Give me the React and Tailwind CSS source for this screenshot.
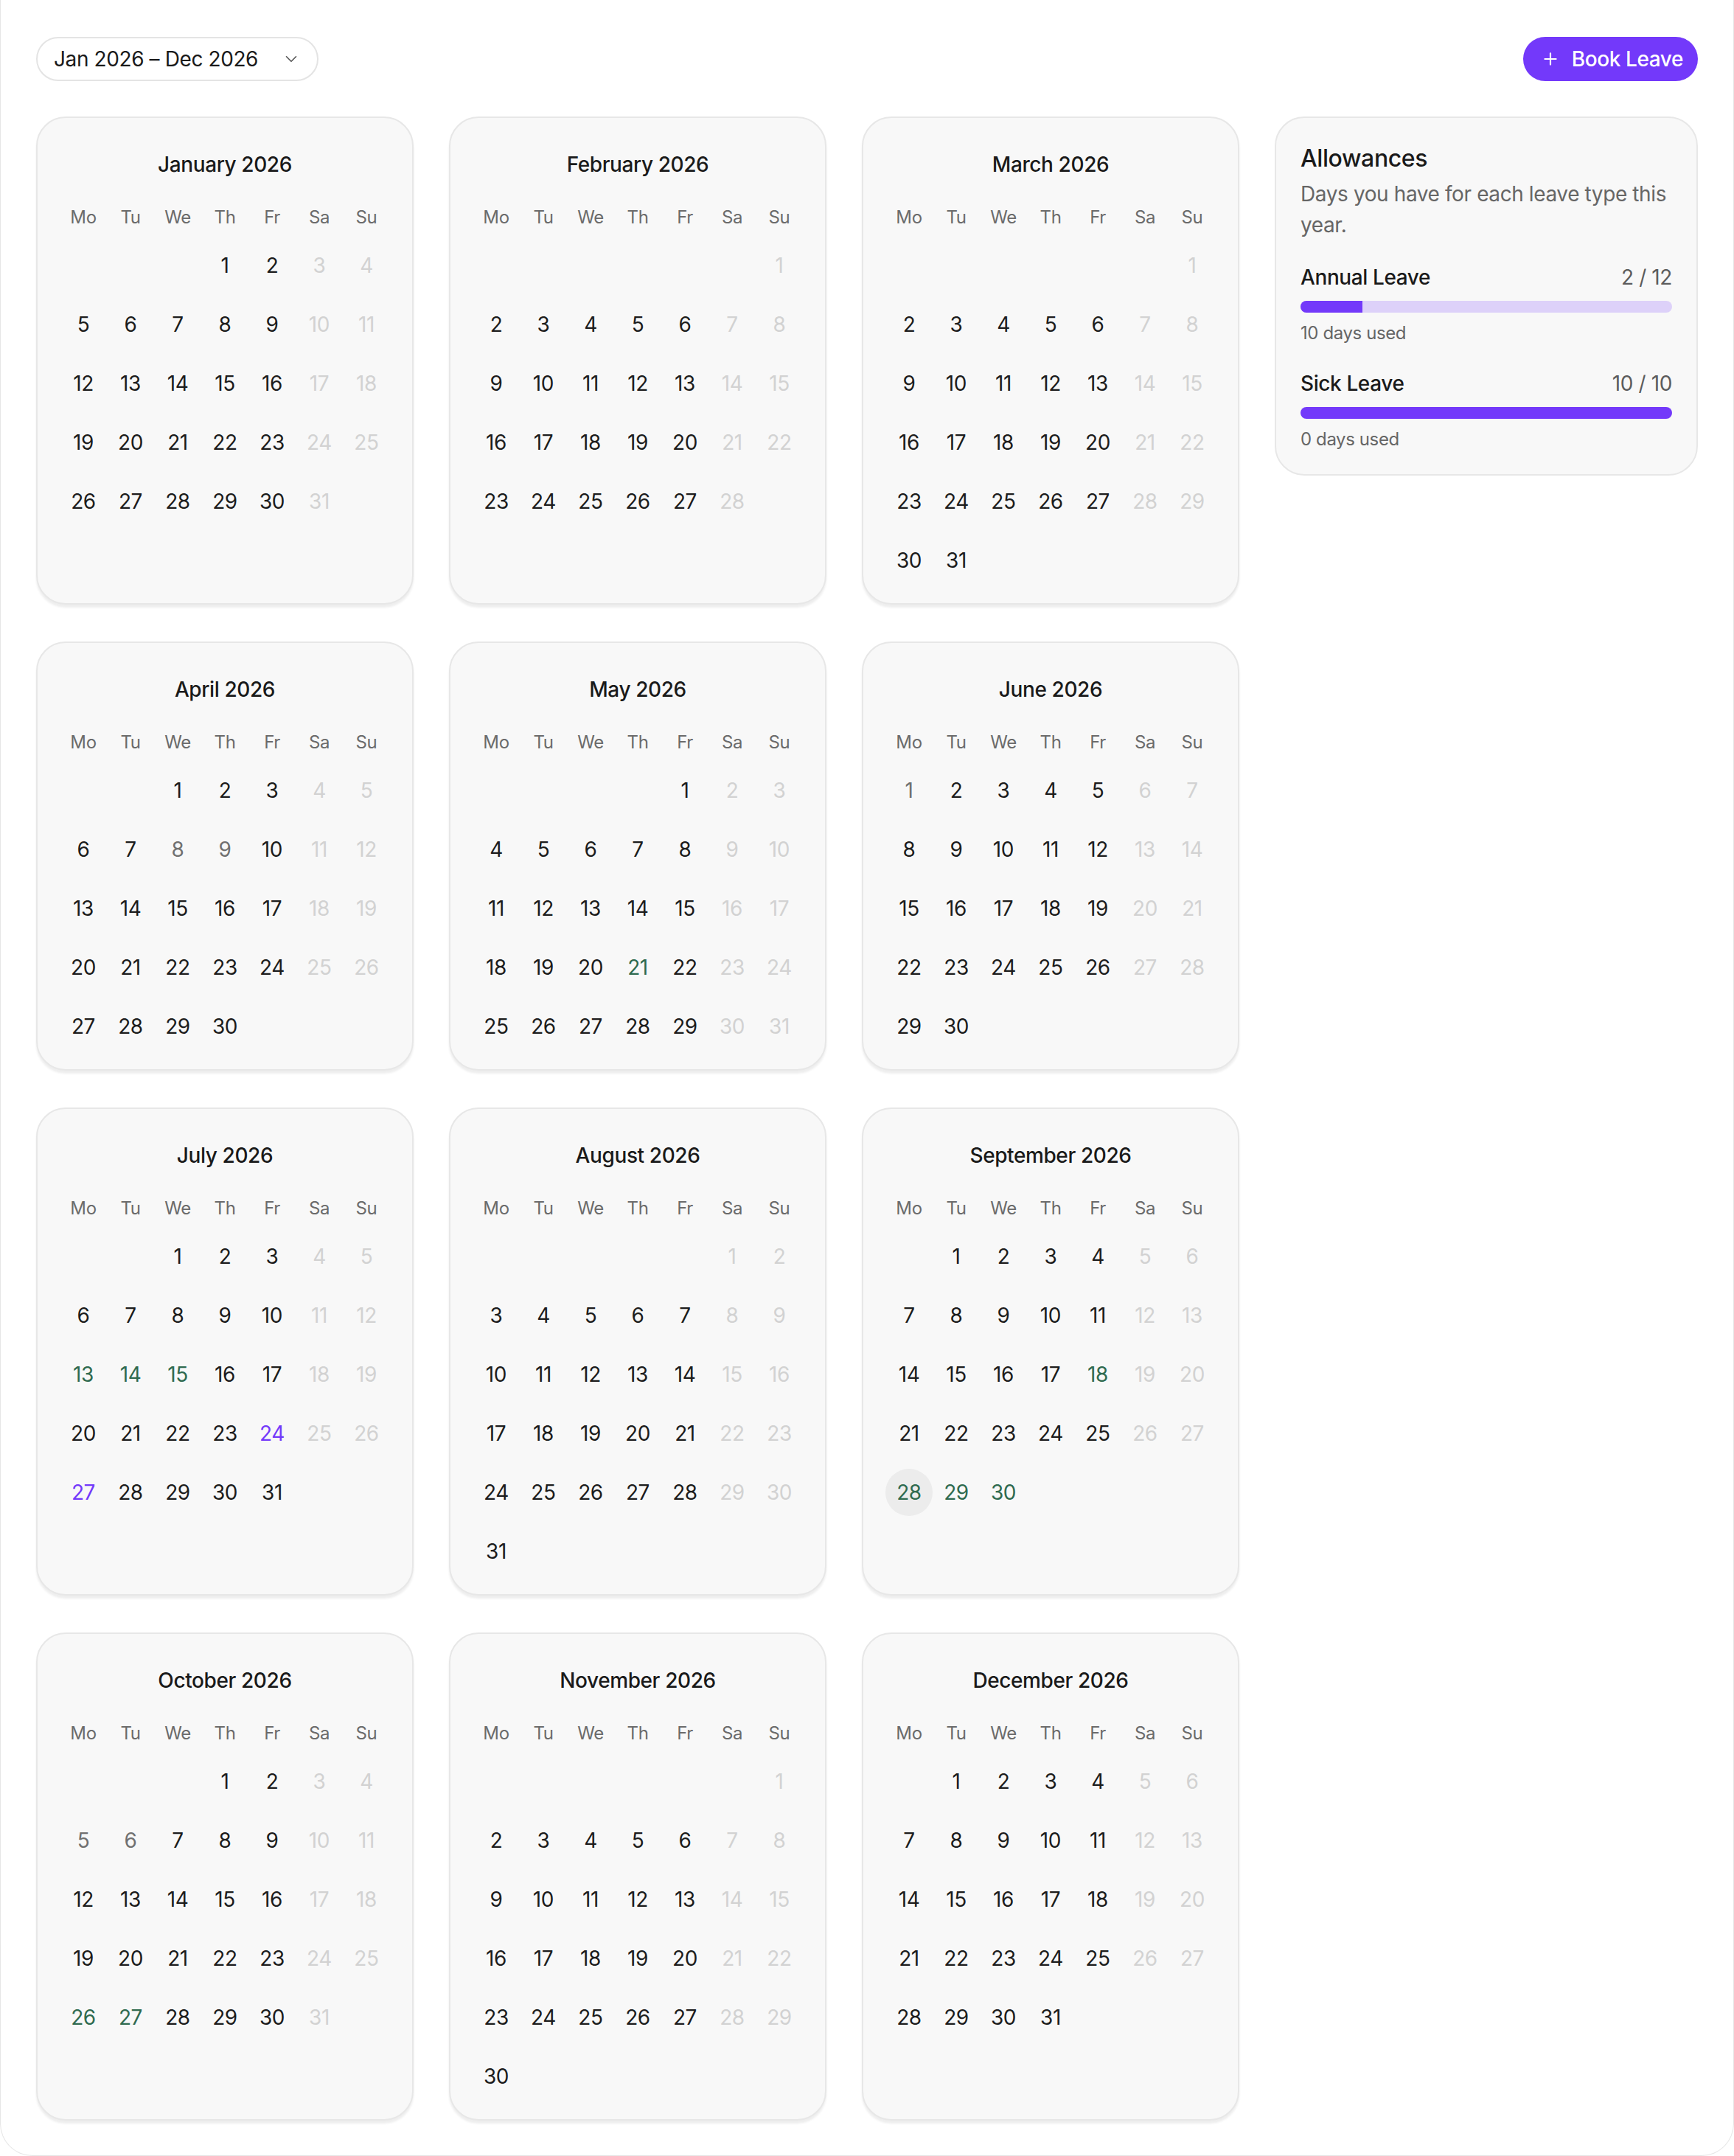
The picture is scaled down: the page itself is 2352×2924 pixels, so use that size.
import { ChevronDown, Plus } from 'lucide-react';

const MONTHS = [
  'January', 'February', 'March', 'April', 'May', 'June',
  'July', 'August', 'September', 'October', 'November', 'December',
];
const WEEKDAYS = ['Mo', 'Tu', 'We', 'Th', 'Fr', 'Sa', 'Su'];

// días marcados por mes (índice 0 = enero)
const GREEN = { 4: [21], 6: [13, 14, 15], 8: [18, 28, 29, 30], 9: [26, 27] };
const PURPLE = { 6: [24, 27] };
const MUTED = { 3: [8, 9], 5: [1], 9: [5, 6] };
const TODAY = { month: 8, day: 28 };

const YEAR = 2026;

function buildWeeks(month) {
  const first = new Date(YEAR, month, 1);
  const offset = (first.getDay() + 6) % 7;
  const total = new Date(YEAR, month + 1, 0).getDate();
  const cells = [];
  for (let i = 0; i < offset; i++) cells.push(null);
  for (let d = 1; d <= total; d++) cells.push(d);
  while (cells.length % 7 !== 0) cells.push(null);
  const weeks = [];
  for (let i = 0; i < cells.length; i += 7) weeks.push(cells.slice(i, i + 7));
  return weeks;
}

function dayColor(month, day, col) {
  if ((GREEN[month] || []).includes(day)) return 'text-[#2f6a4f]';
  if ((PURPLE[month] || []).includes(day)) return 'text-[#7339fa]';
  if ((MUTED[month] || []).includes(day)) return 'text-[#707070]';
  if (col >= 5) return 'text-[#d2d2d2]';
  return 'text-[#1c1c1c]';
}

function MonthCard({ month }) {
  const weeks = buildWeeks(month);
  return (
    <div className="rounded-[40px] border-2 border-[#e7e7e7] bg-[#f8f8f8] pt-[43px] pb-[26px] shadow-[0_4px_3px_rgba(0,0,0,0.07)]">
      <h2 className="h-[40px] text-center text-[28px] leading-[40px] font-medium text-[#1a1a1a]">
        {MONTHS[month]} {YEAR}
      </h2>
      <div className="mt-[35px] grid grid-cols-[repeat(7,64px)] justify-center">
        {WEEKDAYS.map((w) => (
          <div key={w} className="h-[34px] text-center text-[24px] leading-[34px] text-[#6b6b6b]">
            {w}
          </div>
        ))}
      </div>
      <div className="mt-[16px] flex flex-col gap-[16px]">
        {weeks.map((week, wi) => (
          <div key={wi} className="grid grid-cols-[repeat(7,64px)] justify-center">
            {week.map((day, col) => {
              const isToday = day === TODAY.day && month === TODAY.month;
              return (
                <div
                  key={col}
                  className={
                    'flex h-[64px] w-[64px] items-center justify-center rounded-full text-[28px] ' +
                    (day ? dayColor(month, day, col) : '') +
                    (isToday ? ' bg-[#ececec]' : '')
                  }
                >
                  {day || ''}
                </div>
              );
            })}
          </div>
        ))}
      </div>
    </div>
  );
}

function AllowanceRow({ label, used, total, note }) {
  const pct = (used / total) * 100;
  return (
    <div>
      <div className="flex items-center justify-between text-[28px] leading-[40px]">
        <span className="font-medium text-[#1a1a1a]">{label}</span>
        <span className="text-[#5c5c5c]">
          {used} / {total}
        </span>
      </div>
      <div className="mt-[12px] h-[16px] w-full overflow-hidden rounded-full bg-[#ddd1f9]">
        <div className="h-full bg-[#7339fa]" style={{ width: `${pct}%` }} />
      </div>
      <p className="mt-[12px] text-[24px] leading-[32px] text-[#666]">{note}</p>
    </div>
  );
}

export default function App() {
  return (
    <div className="min-h-[2924px] rounded-b-[44px] border-x border-b border-[#e6e6e6] bg-white px-12 pt-[50px] font-['Inter','Noto_Sans',sans-serif] tracking-[-0.025em]">
      {/* Barra superior */}
      <div className="flex items-center justify-between">
        <button className="flex h-[60px] w-[383px] items-center justify-between rounded-full border-2 border-[#e4e4e4] bg-white pl-[22px] pr-[22px] text-[28px] text-[#1a1a1a]">
          <span>Jan 2026 – Dec 2026</span>
          <ChevronDown size={26} strokeWidth={1.5} className="text-[#555]" />
        </button>
        <button className="flex h-[60px] items-center gap-[16px] rounded-full bg-[#7339fa] pl-[24px] pr-[20px] text-[28px] font-medium text-white">
          <Plus size={26} strokeWidth={2} />
          Book Leave
        </button>
      </div>

      <div className="mt-12 flex items-start gap-12">
        {/* Calendario anual */}
        <div className="grid w-[1632px] shrink-0 grid-cols-3 gap-x-12 gap-y-[50px]">
          {MONTHS.map((_, i) => (
            <MonthCard key={i} month={i} />
          ))}
        </div>

        {/* Panel de saldos */}
        <aside className="flex-1 rounded-[40px] border-2 border-[#e7e7e7] bg-[#f8f8f8] px-[33px] pt-[35px] pb-[31px]">
          <h3 className="text-[32px] leading-[40px] font-medium text-[#1a1a1a]">Allowances</h3>
          <p className="mt-[7px] text-[28px] leading-[42px] text-[#666]">
            Days you have for each leave type this year.
          </p>
          <div className="mt-[30px] flex flex-col gap-[32px]">
            <AllowanceRow label="Annual Leave" used={2} total={12} note="10 days used" />
            <AllowanceRow label="Sick Leave" used={10} total={10} note="0 days used" />
          </div>
        </aside>
      </div>
    </div>
  );
}
